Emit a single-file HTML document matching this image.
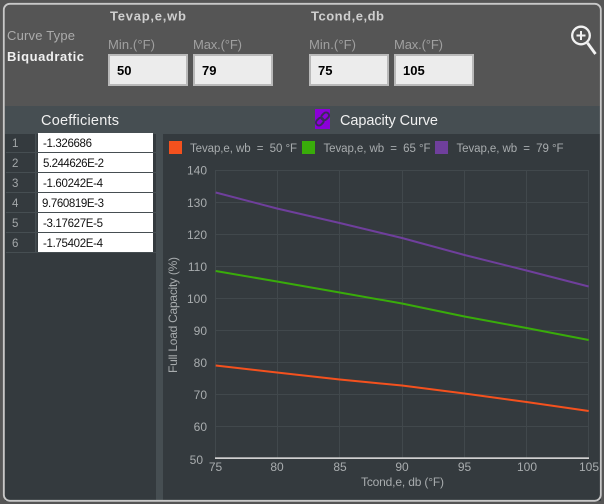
<!DOCTYPE html>
<html><head><meta charset="utf-8"><style>
html,body{margin:0;padding:0;background:#555555;width:604px;height:504px;overflow:hidden}
svg{display:block;font-family:"Liberation Sans",sans-serif}
text{white-space:pre}
</style></head><body>
<svg width="604" height="504" viewBox="0 0 604 504" xmlns="http://www.w3.org/2000/svg">
<rect width="604" height="504" fill="#555555"/>
<rect x="5" y="106" width="596" height="28" fill="#464e52"/>
<rect x="5" y="134" width="596" height="367" fill="#343a3e"/>
<rect x="156" y="134" width="7" height="367" fill="#464e52"/>
<rect x="3.800" y="3.800" width="597" height="497" rx="6" fill="none" stroke="#c8c8c8" stroke-width="1.800"/>

<text x="7" y="40" font-size="13" fill="#ababab" textLength="68">Curve Type</text>
<text x="7" y="61" font-size="13" font-weight="bold" fill="#f0f0f0" textLength="77">Biquadratic</text>
<text x="110" y="20.500" font-size="13" font-weight="bold" fill="#cfcfcf" textLength="76">Tevap,e,wb</text>
<text x="311" y="20.500" font-size="13" font-weight="bold" fill="#cfcfcf" textLength="73">Tcond,e,db</text>

<g font-size="13" fill="#a0a0a0">
<text x="108" y="49" textLength="47">Min.(°F)</text>
<text x="193" y="49" textLength="49">Max.(°F)</text>
<text x="309" y="49" textLength="47">Min.(°F)</text>
<text x="394" y="49" textLength="49">Max.(°F)</text>
</g>
<g fill="#ececec" stroke="#b9b9b9" stroke-width="2">
<rect x="109" y="55" width="78" height="30"/>
<rect x="194" y="55" width="78" height="30"/>
<rect x="310" y="55" width="78" height="30"/>
<rect x="395" y="55" width="78" height="30"/>
</g>
<g font-size="13" font-weight="bold" fill="#000">
<text x="117" y="75">50</text>
<text x="202" y="75">79</text>
<text x="318" y="75">75</text>
<text x="403" y="75">105</text>
</g>

<g fill="none" stroke="#f2f2f2">
<circle cx="581" cy="35.500" r="8.800" stroke-width="2.300"/>
<path d="M576.500 35.500H585.500M581 31V40" stroke-width="2"/>
<path d="M587.500 43L595.500 54" stroke-width="2.800"/>
</g>

<text x="41" y="125" font-size="14.500" fill="#f0f0f0" textLength="78">Coefficients</text>
<text x="340" y="125" font-size="14.500" fill="#f0f0f0" textLength="98">Capacity Curve</text>
<rect x="315" y="109" width="15" height="20" fill="#8b00d8"/>
<g fill="none" stroke="#3a2a58" stroke-width="2" transform="rotate(-45 322.500 119)">
<rect x="314.500" y="116" width="8.500" height="6" rx="3"/>
<rect x="322" y="116" width="8.500" height="6" rx="3"/>
</g>

<g fill="#464e52">
<rect x="6" y="152" width="150" height="1"/><rect x="6" y="172" width="150" height="1"/>
<rect x="6" y="192" width="150" height="1"/><rect x="6" y="212" width="150" height="1"/>
<rect x="6" y="232" width="150" height="1"/><rect x="6" y="252" width="150" height="1"/>
<rect x="35" y="133" width="1.500" height="119"/>
</g>
<g fill="#ffffff">
<rect x="38" y="133" width="115" height="19"/><rect x="38" y="153" width="115" height="19"/>
<rect x="38" y="173" width="115" height="19"/><rect x="38" y="193" width="115" height="19"/>
<rect x="38" y="213" width="115" height="19"/><rect x="38" y="233" width="115" height="19"/>
</g>
<g font-size="11.500" fill="#a4a8aa">
<text x="12" y="147">1</text><text x="12" y="167">2</text><text x="12" y="187">3</text>
<text x="12" y="207">4</text><text x="12" y="227">5</text><text x="12" y="247">6</text>
</g>
<g font-size="11.500" fill="#111">
<text x="43" y="147" textLength="49">-1.326686</text>
<text x="43" y="167" textLength="61">5.244626E-2</text>
<text x="43" y="187" textLength="60">-1.60242E-4</text>
<text x="42" y="207" textLength="62">9.760819E-3</text>
<text x="43" y="227" textLength="60">-3.17627E-5</text>
<text x="43" y="247" textLength="60">-1.75402E-4</text>
</g>

<rect x="169" y="141" width="13" height="13" fill="#f4511e"/>
<rect x="302" y="141" width="13" height="13" fill="#39ac0a"/>
<rect x="435" y="141" width="13" height="13" fill="#6f3f9c"/>
<g font-size="11.500" fill="#a8acae">
<text x="190" y="152" textLength="107">Tevap,e, wb  =  50 °F</text>
<text x="323.500" y="152" textLength="107">Tevap,e, wb  =  65 °F</text>
<text x="456.500" y="152" textLength="107">Tevap,e, wb  =  79 °F</text>
</g>

<g stroke="#41484c" stroke-width="1" fill="none">
<path d="M215.500 170.500H589M215.500 202.500H589M215.500 234.500H589M215.500 266.500H589M215.500 298.500H589M215.500 330.500H589M215.500 362.500H589M215.500 394.500H589M215.500 426.500H589"/>
<path d="M215.500 170V458M277.500 170V458M339.500 170V458M402.500 170V458M464.500 170V458M526.500 170V458M588.500 170V458"/>
</g>
<rect x="215" y="457.300" width="374" height="1.700" fill="#d0d0d0"/>

<g fill="none" stroke-width="2">
<path d="M215.700 192.500L277 208.500L339.700 223L402 238L464.500 255L526.500 270.500L588.700 286.500" stroke="#6f3f9c"/>
<path d="M215.700 271L277 281.500L339.700 292.500L402 303.500L464.500 316.500L526.500 328L588.700 340" stroke="#39ac0a"/>
<path d="M215.700 365.500L277 372.500L339.700 379.500L402 385.500L464.500 393.500L526.500 402L588.700 411" stroke="#f4511e"/>
</g>

<g font-size="12" fill="#a8acae" text-anchor="end">
<text x="207" y="174.500">140</text><text x="207" y="207">130</text><text x="207" y="239">120</text>
<text x="207" y="271">110</text><text x="207" y="303">100</text><text x="207" y="335">90</text>
<text x="207" y="367">80</text><text x="207" y="399">70</text><text x="207" y="431">60</text>
<text x="203" y="464">50</text>
</g>
<g font-size="12" fill="#a8acae" text-anchor="middle">
<text x="215.500" y="471">75</text><text x="277" y="471">80</text><text x="340" y="471">85</text>
<text x="402" y="471">90</text><text x="464.500" y="471">95</text><text x="527" y="471">100</text>
<text x="589" y="471">105</text>
</g>
<text x="361" y="486" font-size="12" fill="#a8acae" textLength="83">Tcond,e, db (°F)</text>
<text transform="translate(177 373) rotate(-90)" font-size="12" fill="#a8acae" textLength="116">Full Load Capacity (%)</text>
</svg>
</body></html>
